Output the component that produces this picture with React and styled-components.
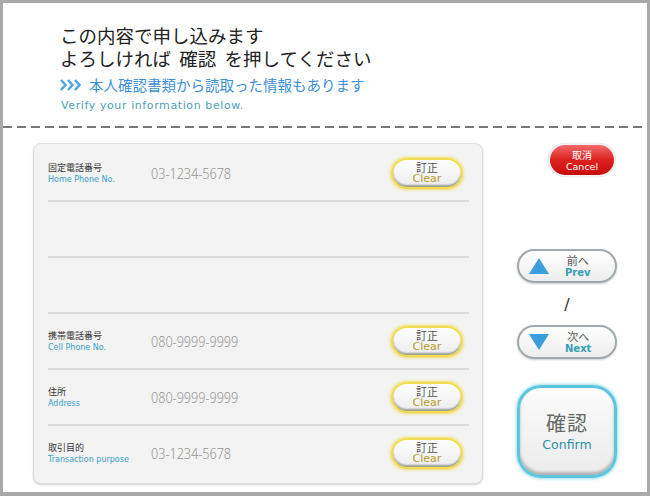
import styled, { createGlobalStyle } from 'styled-components'

const Global = createGlobalStyle`
  html, body { margin: 0; padding: 0; background: #fff; }
  body { font-family: "Noto Sans CJK JP", "Noto Sans", sans-serif; }
`

const Frame = styled.div`
  width: 650px;
  height: 496px;
  box-sizing: border-box;
  border: 3px solid #a9a9a9;
  border-bottom-width: 4px;
  background: #fff;
  display: flex;
  flex-direction: column;
  overflow: hidden;
`

const Header = styled.header`
  padding: 21px 0 13px 57px;
`

const Title = styled.h1`
  margin: 0;
  font-size: 18.5px;
  line-height: 23px;
  font-weight: 400;
  color: #222;
  white-space: pre;
`

const Notice = styled.p`
  margin: 5px 0 0;
  display: flex;
  align-items: center;
  gap: 8px;
  font-size: 14.5px;
  line-height: 20px;
  color: #3a8fd6;
`

const Verify = styled.p`
  margin: 4px 0 0 1px;
  font-family: "DejaVu Sans", sans-serif;
  font-size: 11px;
  line-height: 14px;
  letter-spacing: 0.6px;
  color: #4d9fb6;
`

const Dashes = styled.div`
  flex: none;
  height: 2px;
  background: repeating-linear-gradient(to right, #777 0 9px, transparent 9px 14px);
`

const Body = styled.main`
  flex: 1;
  display: flex;
  padding: 15px 0 0 30px;
`

const Panel = styled.section`
  width: 450px;
  height: 341px;
  box-sizing: border-box;
  padding: 2px 13px 4px 14px;
  background: #f3f3f3;
  border: 1px solid #dedede;
  border-radius: 8px;
  box-shadow: 0 1px 2px rgba(0, 0, 0, 0.18);
`

const Row = styled.div`
  height: 54px;
  display: flex;
  align-items: center;
  border-bottom: ${p => (p.$last ? 'none' : '2px solid #dcdcdc')};
`

const Label = styled.div`
  width: 103px;
  display: flex;
  flex-direction: column;
  gap: 2px;
`

const LabelJa = styled.span`
  font-size: 9px;
  line-height: 11px;
  color: #333;
`

const LabelEn = styled.span`
  font-family: "DejaVu Sans", sans-serif;
  font-size: 8px;
  line-height: 10px;
  color: #3aa0c2;
`

const Value = styled.span`
  flex: 1;
  font-family: "Noto Sans", sans-serif;
  font-size: 15px;
  font-weight: 300;
  color: #959595;
  display: inline-block;
  transform: scaleX(0.84);
  transform-origin: left center;
  margin-top: -1px;
`

const ClearButton = styled.button`
  width: 72px;
  height: 31px;
  margin-right: 6px;
  padding: 0;
  border: 2px solid #f2dc4a;
  border-radius: 16px;
  background: linear-gradient(#ffffff, #ececec);
  box-shadow: 0 0 3px 1px rgba(240, 215, 60, 0.7), inset 0 -2px 2px rgba(0, 0, 0, 0.35);
  display: flex;
  flex-direction: column;
  align-items: center;
  justify-content: center;
  color: #555;
`

const ClearJa = styled.span`
  font-family: "Noto Sans CJK JP", sans-serif;
  font-size: 11px;
  line-height: 12px;
`

const ClearEn = styled.span`
  font-family: "DejaVu Sans", sans-serif;
  font-size: 11px;
  line-height: 12px;
  color: #b49b2e;
`

const Side = styled.aside`
  flex: 1;
  display: flex;
  flex-direction: column;
  align-items: center;
  padding-left: 4px;
`

const CancelRing = styled.div`
  align-self: flex-end;
  margin-right: 31px;
  padding: 2px;
  border-radius: 18px;
  background: #f1f1f1;
  box-shadow: 0 0 1px rgba(0, 0, 0, 0.2);
`

const CancelButton = styled.button`
  width: 64px;
  height: 30px;
  padding: 0;
  border: none;
  border-radius: 15px;
  background: linear-gradient(#f26a6a, #dd2020 50%, #c80c0c);
  color: #fff;
  display: flex;
  flex-direction: column;
  align-items: center;
  justify-content: center;
`

const CancelJa = styled.span`
  font-family: "Noto Sans CJK JP", sans-serif;
  font-size: 10px;
  line-height: 12px;
`

const CancelEn = styled.span`
  font-family: "DejaVu Sans", sans-serif;
  font-size: 9.5px;
  line-height: 11px;
`

const NavButton = styled.button`
  width: 100px;
  height: 34px;
  margin-top: ${p => p.$top || 0}px;
  padding: 0 0 0 10px;
  box-sizing: border-box;
  border: 2px solid #9fa9ae;
  border-radius: 17px;
  background: linear-gradient(#ffffff, #ededed);
  box-shadow: 0 1px 2px rgba(0, 0, 0, 0.2);
  display: flex;
  align-items: center;
  gap: 16px;
`

const NavText = styled.span`
  display: flex;
  flex-direction: column;
  align-items: center;
  color: #555;
`

const NavJa = styled.span`
  font-family: "Noto Sans CJK JP", sans-serif;
  font-size: 11px;
  line-height: 13px;
`

const NavEn = styled.span`
  font-family: "DejaVu Sans", sans-serif;
  font-weight: bold;
  font-size: 10px;
  line-height: 12px;
  color: #35a0b6;
`

const Slash = styled.span`
  margin: 12px 0 10px;
  font-family: "DejaVu Sans", sans-serif;
  font-size: 16px;
  line-height: 20px;
  color: #333;
`

const ConfirmButton = styled.button`
  margin-top: 26px;
  width: 100px;
  height: 93px;
  padding: 0;
  border: 3px solid #5cc6df;
  border-radius: 24px;
  background: linear-gradient(#fbfbfb, #ececec);
  box-shadow: 0 0 3px 1px rgba(92, 198, 223, 0.6), inset 0 -3px 3px rgba(0, 0, 0, 0.25);
  display: flex;
  flex-direction: column;
  align-items: center;
  justify-content: center;
  gap: 2px;
`

const ConfirmJa = styled.span`
  font-family: "Noto Sans CJK JP", sans-serif;
  font-size: 20px;
  line-height: 24px;
  color: #666;
  letter-spacing: 1px;
`

const ConfirmEn = styled.span`
  font-family: "DejaVu Sans", sans-serif;
  font-size: 12.5px;
  line-height: 15px;
  color: #2b8fa8;
`

const Chevrons = () => (
  <svg width="21" height="12" viewBox="0 0 21 12">
    {[1, 8, 15].map(x => (
      <polyline key={x} points={`${x},1 ${x + 4.5},6 ${x},11`} fill="none" stroke="#4da3e2" strokeWidth="2.4" />
    ))}
  </svg>
)

const Triangle = ({ down }) => (
  <svg width="20" height="16" viewBox="0 0 20 16">
    <polygon points={down ? '0,0 20,0 10,16' : '10,0 20,16 0,16'} fill="#3b9fde" />
  </svg>
)

const rows = [
  { ja: '固定電話番号', en: 'Home Phone No.', value: '03-1234-5678' },
  null,
  null,
  { ja: '携帯電話番号', en: 'Cell Phone No.', value: '080-9999-9999' },
  { ja: '住所', en: 'Address', value: '080-9999-9999' },
  { ja: '取引目的', en: 'Transaction purpose', value: '03-1234-5678' },
]

export default function App() {
  return (
    <Frame>
      <Global />
      <Header>
        <Title>{'この内容で申し込みます\nよろしければ  確認  を押してください'}</Title>
        <Notice>
          <Chevrons />
          本人確認書類から読取った情報もあります
        </Notice>
        <Verify>Verify your information below.</Verify>
      </Header>
      <Dashes />
      <Body>
        <Panel>
          {rows.map((r, i) => (
            <Row key={i} $last={i === rows.length - 1}>
              {r && (
                <>
                  <Label>
                    <LabelJa>{r.ja}</LabelJa>
                    <LabelEn>{r.en}</LabelEn>
                  </Label>
                  <Value>{r.value}</Value>
                  <ClearButton>
                    <ClearJa>訂正</ClearJa>
                    <ClearEn>Clear</ClearEn>
                  </ClearButton>
                </>
              )}
            </Row>
          ))}
        </Panel>
        <Side>
          <CancelRing>
            <CancelButton>
              <CancelJa>取消</CancelJa>
              <CancelEn>Cancel</CancelEn>
            </CancelButton>
          </CancelRing>
          <NavButton $top={72}>
            <Triangle />
            <NavText>
              <NavJa>前へ</NavJa>
              <NavEn>Prev</NavEn>
            </NavText>
          </NavButton>
          <Slash>/</Slash>
          <NavButton>
            <Triangle down />
            <NavText>
              <NavJa>次へ</NavJa>
              <NavEn>Next</NavEn>
            </NavText>
          </NavButton>
          <ConfirmButton>
            <ConfirmJa>確認</ConfirmJa>
            <ConfirmEn>Confirm</ConfirmEn>
          </ConfirmButton>
        </Side>
      </Body>
    </Frame>
  )
}
